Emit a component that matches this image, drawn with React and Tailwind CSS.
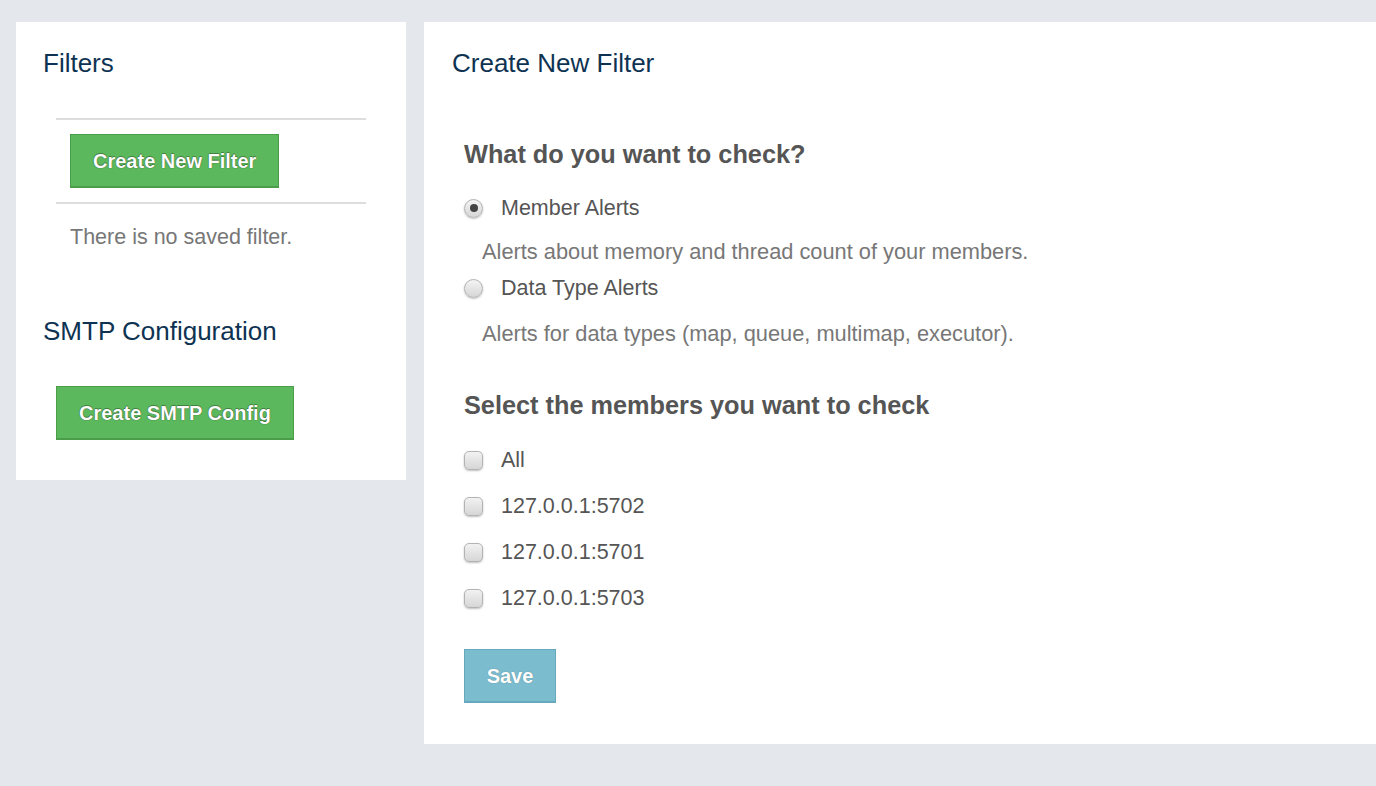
import { useState } from 'react'

const MEMBERS = ['All', '127.0.0.1:5702', '127.0.0.1:5701', '127.0.0.1:5703']

const ALERT_TYPES = [
  { id: 'member', label: 'Member Alerts', description: 'Alerts about memory and thread count of your members.' },
  { id: 'datatype', label: 'Data Type Alerts', description: 'Alerts for data types (map, queue, multimap, executor).' },
]

function GreenButton({ children, className = '' }) {
  return (
    <button
      className={`h-[54px] px-[22px] bg-[#5cb85c] border border-b-2 border-[#4b9d4a] text-white font-bold text-[20px] leading-none [text-shadow:0_0_1px_rgba(0,0,0,0.7),0_-1px_0_rgba(0,0,0,0.25)] ${className}`}
    >
      {children}
    </button>
  )
}

function Radio({ checked, onChange }) {
  return (
    <span
      onClick={onChange}
      className="relative inline-flex h-[19px] w-[19px] shrink-0 items-center justify-center rounded-full border border-[#b3b3b3] bg-gradient-to-b from-[#f4f4f4] to-[#d6d6d6] shadow-[0_1px_2px_rgba(0,0,0,0.25)] cursor-pointer"
    >
      {checked && <span className="h-[8px] w-[8px] rounded-full bg-[#444]" />}
    </span>
  )
}

function Checkbox({ checked, onChange }) {
  return (
    <span
      onClick={onChange}
      className="relative inline-flex h-[19px] w-[19px] shrink-0 items-center justify-center rounded-[5px] border border-[#b3b3b3] bg-gradient-to-b from-[#f2f2f2] to-[#d6d6d6] shadow-[0_1px_2px_rgba(0,0,0,0.25)] cursor-pointer"
    >
      {checked && <span className="text-[13px] leading-none text-[#333]">✓</span>}
    </span>
  )
}

export default function App() {
  const [alertType, setAlertType] = useState('member')
  const [selected, setSelected] = useState({})

  const toggleMember = (m) => setSelected({ ...selected, [m]: !selected[m] })

  return (
    <div className="min-h-screen bg-[#e4e7ec] pt-[22px] pl-4 font-['Liberation_Sans',Arial,sans-serif] overflow-hidden">
      <div className="flex items-start gap-[18px]">
        <div className="w-[390px] shrink-0 bg-white pt-[26px] pb-[40px] px-[27px]">
          <h2 className="text-[26px] leading-[30px] text-[#0e3352]">Filters</h2>
          <div className="mx-[13px] mt-[40px]">
            <div className="border-t-2 border-[#dddddd] pt-[14px] pb-[14px] pl-[14px]">
              <GreenButton>Create New Filter</GreenButton>
            </div>
            <div className="border-t-2 border-[#dddddd] pt-[18px] pl-[14px]">
              <p className="text-[21.5px] leading-[30px] text-[#777]">There is no saved filter.</p>
            </div>
          </div>

          <h2 className="mt-[64px] text-[26px] leading-[30px] text-[#0e3352]">SMTP Configuration</h2>
          <div className="mt-[40px] ml-[13px]">
            <GreenButton>Create SMTP Config</GreenButton>
          </div>
        </div>

        <div className="flex-1 bg-white pt-[26px] pb-[41px] px-[28px]">
          <h2 className="text-[26px] leading-[30px] text-[#0e3352]">Create New Filter</h2>

          <form className="ml-[12px]" onSubmit={(e) => e.preventDefault()}>
            <h4 className="mt-[61px] text-[25.3px] leading-[30px] font-bold text-[#555]">What do you want to check?</h4>

            <div className="mt-[24px]">
              {ALERT_TYPES.map((t, i) => (
                <div key={t.id} className={i > 0 ? 'mt-[6px]' : ''}>
                  <label className="flex items-center gap-[18px] h-[30px]">
                    <Radio checked={alertType === t.id} onChange={() => setAlertType(t.id)} />
                    <span className="text-[21.5px] leading-[30px] text-[#555]">{t.label}</span>
                  </label>
                  <p className={`${i === 0 ? 'mt-[14px]' : 'mt-[16px]'} ml-[18px] text-[21.8px] leading-[30px] text-[#777]`}>
                    {t.description}
                  </p>
                </div>
              ))}
            </div>

            <h4 className="mt-[41px] text-[25.3px] leading-[30px] font-bold text-[#555]">Select the members you want to check</h4>

            <div className="mt-[25px] flex flex-col gap-[16px]">
              {MEMBERS.map((m) => (
                <label key={m} className="flex items-center gap-[18px] h-[30px]">
                  <Checkbox checked={!!selected[m]} onChange={() => toggleMember(m)} />
                  <span className="text-[21.5px] leading-[30px] text-[#555]">{m}</span>
                </label>
              ))}
            </div>

            <button
              type="submit"
              className="mt-[36px] h-[54px] w-[92px] bg-[#7bbccf] border border-b-2 border-[#68a8bc] text-white font-bold text-[20px] leading-none [text-shadow:0_0_1px_rgba(0,0,0,0.35)]"
            >
              Save
            </button>
          </form>
        </div>
      </div>
    </div>
  )
}
